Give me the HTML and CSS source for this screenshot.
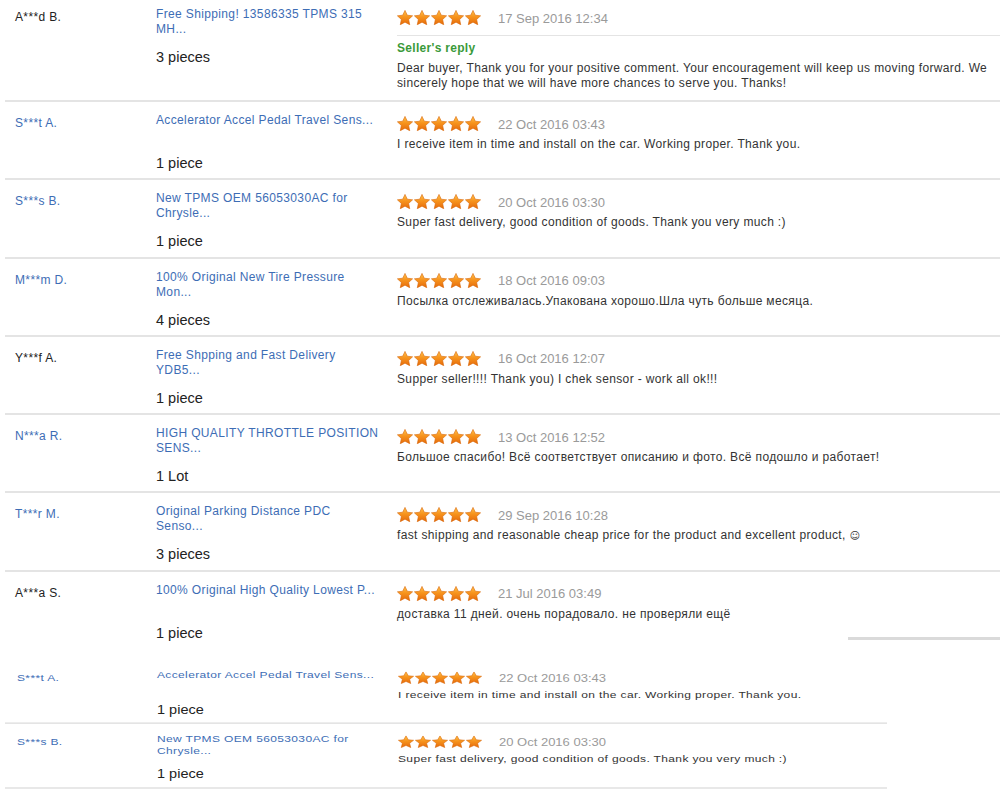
FILE: index.html
```html
<!DOCTYPE html>
<html lang="en">
<head>
<meta charset="utf-8">
<title>Feedback</title>
<link rel="stylesheet" href="styles.css">
</head>
<body>
<svg class="defs" aria-hidden="true">
  <defs>
    <linearGradient id="starFill" x1="0" y1="0" x2="0" y2="1">
      <stop offset="0" stop-color="#ffc04a"/>
      <stop offset="0.45" stop-color="#f7941d"/>
      <stop offset="1" stop-color="#e56a0b"/>
    </linearGradient>
    <symbol id="star" viewBox="0 0 16 15.2">
      <path d="M8 0.4 L10.3 5.2 L15.6 5.85 L11.65 9.45 L12.75 14.75 L8 12.15 L3.25 14.75 L4.35 9.45 L0.4 5.85 L5.7 5.2 Z" fill="url(#starFill)" stroke="#d8680c" stroke-width="0.6" stroke-linejoin="round"/>
    </symbol>
  </defs>
</svg>

<div class="reviews">
  <div class="review review--first">
    <div class="buyer">A***d B.</div>
    <div class="product">
      <a class="product-title" href="#">Free Shipping! 13586335 TPMS 315<br>MH...</a>
      <div class="qty">3 pieces</div>
    </div>
    <div class="feedback">
      <div class="rating">
        <svg class="stars" viewBox="0 0 84 16"><use href="#star" x="0" y="0" width="16" height="15.2"/><use href="#star" x="17" y="0" width="16" height="15.2"/><use href="#star" x="34" y="0" width="16" height="15.2"/><use href="#star" x="51" y="0" width="16" height="15.2"/><use href="#star" x="68" y="0" width="16" height="15.2"/></svg>
        <span class="date">17 Sep 2016 12:34</span>
      </div>
      <div class="reply">
        <div class="reply-title">Seller's reply</div>
        <div class="reply-text">Dear buyer, Thank you for your positive comment. Your encouragement will keep us moving forward. We sincerely hope that we will have more chances to serve you. Thanks!</div>
      </div>
    </div>
  </div>

  <div class="review">
    <div class="buyer buyer--link">S***t A.</div>
    <div class="product">
      <a class="product-title" href="#">Accelerator Accel Pedal Travel Sens...</a>
      <div class="qty">1 piece</div>
    </div>
    <div class="feedback">
      <div class="rating">
        <svg class="stars" viewBox="0 0 84 16"><use href="#star" x="0" y="0" width="16" height="15.2"/><use href="#star" x="17" y="0" width="16" height="15.2"/><use href="#star" x="34" y="0" width="16" height="15.2"/><use href="#star" x="51" y="0" width="16" height="15.2"/><use href="#star" x="68" y="0" width="16" height="15.2"/></svg>
        <span class="date">22 Oct 2016 03:43</span>
      </div>
      <div class="comment">I receive item in time and install on the car. Working proper. Thank you.</div>
    </div>
  </div>

  <div class="review">
    <div class="buyer buyer--link">S***s B.</div>
    <div class="product">
      <a class="product-title" href="#">New TPMS OEM 56053030AC for<br>Chrysle...</a>
      <div class="qty">1 piece</div>
    </div>
    <div class="feedback">
      <div class="rating">
        <svg class="stars" viewBox="0 0 84 16"><use href="#star" x="0" y="0" width="16" height="15.2"/><use href="#star" x="17" y="0" width="16" height="15.2"/><use href="#star" x="34" y="0" width="16" height="15.2"/><use href="#star" x="51" y="0" width="16" height="15.2"/><use href="#star" x="68" y="0" width="16" height="15.2"/></svg>
        <span class="date">20 Oct 2016 03:30</span>
      </div>
      <div class="comment">Super fast delivery, good condition of goods. Thank you very much :)</div>
    </div>
  </div>

  <div class="review">
    <div class="buyer buyer--link">M***m D.</div>
    <div class="product">
      <a class="product-title" href="#">100% Original New Tire Pressure<br>Mon...</a>
      <div class="qty">4 pieces</div>
    </div>
    <div class="feedback">
      <div class="rating">
        <svg class="stars" viewBox="0 0 84 16"><use href="#star" x="0" y="0" width="16" height="15.2"/><use href="#star" x="17" y="0" width="16" height="15.2"/><use href="#star" x="34" y="0" width="16" height="15.2"/><use href="#star" x="51" y="0" width="16" height="15.2"/><use href="#star" x="68" y="0" width="16" height="15.2"/></svg>
        <span class="date">18 Oct 2016 09:03</span>
      </div>
      <div class="comment">Посылка отслеживалась.Упакована хорошо.Шла чуть больше месяца.</div>
    </div>
  </div>

  <div class="review">
    <div class="buyer">Y***f A.</div>
    <div class="product">
      <a class="product-title" href="#">Free Shpping and Fast Delivery<br>YDB5...</a>
      <div class="qty">1 piece</div>
    </div>
    <div class="feedback">
      <div class="rating">
        <svg class="stars" viewBox="0 0 84 16"><use href="#star" x="0" y="0" width="16" height="15.2"/><use href="#star" x="17" y="0" width="16" height="15.2"/><use href="#star" x="34" y="0" width="16" height="15.2"/><use href="#star" x="51" y="0" width="16" height="15.2"/><use href="#star" x="68" y="0" width="16" height="15.2"/></svg>
        <span class="date">16 Oct 2016 12:07</span>
      </div>
      <div class="comment">Supper seller!!!! Thank you) I chek sensor - work all ok!!!</div>
    </div>
  </div>

  <div class="review">
    <div class="buyer buyer--link">N***a R.</div>
    <div class="product">
      <a class="product-title" href="#">HIGH QUALITY THROTTLE POSITION<br>SENS...</a>
      <div class="qty">1 Lot</div>
    </div>
    <div class="feedback">
      <div class="rating">
        <svg class="stars" viewBox="0 0 84 16"><use href="#star" x="0" y="0" width="16" height="15.2"/><use href="#star" x="17" y="0" width="16" height="15.2"/><use href="#star" x="34" y="0" width="16" height="15.2"/><use href="#star" x="51" y="0" width="16" height="15.2"/><use href="#star" x="68" y="0" width="16" height="15.2"/></svg>
        <span class="date">13 Oct 2016 12:52</span>
      </div>
      <div class="comment">Большое спасибо! Всё соответствует описанию и фото. Всё подошло и работает!</div>
    </div>
  </div>

  <div class="review">
    <div class="buyer buyer--link">T***r M.</div>
    <div class="product">
      <a class="product-title" href="#">Original Parking Distance PDC<br>Senso...</a>
      <div class="qty">3 pieces</div>
    </div>
    <div class="feedback">
      <div class="rating">
        <svg class="stars" viewBox="0 0 84 16"><use href="#star" x="0" y="0" width="16" height="15.2"/><use href="#star" x="17" y="0" width="16" height="15.2"/><use href="#star" x="34" y="0" width="16" height="15.2"/><use href="#star" x="51" y="0" width="16" height="15.2"/><use href="#star" x="68" y="0" width="16" height="15.2"/></svg>
        <span class="date">29 Sep 2016 10:28</span>
      </div>
      <div class="comment">fast shipping and reasonable cheap price for the product and excellent product, <span class="emoji">☺</span></div>
    </div>
  </div>

  <div class="review review--tail">
    <div class="buyer">A***a S.</div>
    <div class="product">
      <a class="product-title" href="#">100% Original High Quality Lowest P...</a>
      <div class="qty">1 piece</div>
    </div>
    <div class="feedback">
      <div class="rating">
        <svg class="stars" viewBox="0 0 84 16"><use href="#star" x="0" y="0" width="16" height="15.2"/><use href="#star" x="17" y="0" width="16" height="15.2"/><use href="#star" x="34" y="0" width="16" height="15.2"/><use href="#star" x="51" y="0" width="16" height="15.2"/><use href="#star" x="68" y="0" width="16" height="15.2"/></svg>
        <span class="date">21 Jul 2016 03:49</span>
      </div>
      <div class="comment">доставка 11 дней. очень порадовало. не проверяли ещё</div>
      <div class="tail-rule"></div>
    </div>
  </div>

  <div class="compact">
    <div class="review review--compact">
      <div class="buyer buyer--link">S***t A.</div>
      <div class="product">
        <a class="product-title" href="#">Accelerator Accel Pedal Travel Sens...</a>
        <div class="qty">1 piece</div>
      </div>
      <div class="feedback">
        <div class="rating">
          <svg class="stars" viewBox="0 0 84 16"><use href="#star" x="0" y="0" width="16" height="15.2"/><use href="#star" x="17" y="0" width="16" height="15.2"/><use href="#star" x="34" y="0" width="16" height="15.2"/><use href="#star" x="51" y="0" width="16" height="15.2"/><use href="#star" x="68" y="0" width="16" height="15.2"/></svg>
          <span class="date">22 Oct 2016 03:43</span>
        </div>
        <div class="comment">I receive item in time and install on the car. Working proper. Thank you.</div>
      </div>
    </div>

    <div class="review review--compact">
      <div class="buyer buyer--link">S***s B.</div>
      <div class="product">
        <a class="product-title" href="#">New TPMS OEM 56053030AC for<br>Chrysle...</a>
        <div class="qty">1 piece</div>
      </div>
      <div class="feedback">
        <div class="rating">
          <svg class="stars" viewBox="0 0 84 16"><use href="#star" x="0" y="0" width="16" height="15.2"/><use href="#star" x="17" y="0" width="16" height="15.2"/><use href="#star" x="34" y="0" width="16" height="15.2"/><use href="#star" x="51" y="0" width="16" height="15.2"/><use href="#star" x="68" y="0" width="16" height="15.2"/></svg>
          <span class="date">20 Oct 2016 03:30</span>
        </div>
        <div class="comment">Super fast delivery, good condition of goods. Thank you very much :)</div>
      </div>
    </div>

    <div class="review review--compact">
      <div class="buyer buyer--link">M***m D.</div>
      <div class="product">
        <a class="product-title" href="#">100% Original New Tire Pressure<br>Mon...</a>
        <div class="qty">4 pieces</div>
      </div>
      <div class="feedback">
        <div class="rating">
          <svg class="stars" viewBox="0 0 84 16"><use href="#star" x="0" y="0" width="16" height="15.2"/><use href="#star" x="17" y="0" width="16" height="15.2"/><use href="#star" x="34" y="0" width="16" height="15.2"/><use href="#star" x="51" y="0" width="16" height="15.2"/><use href="#star" x="68" y="0" width="16" height="15.2"/></svg>
          <span class="date">18 Oct 2016 09:03</span>
        </div>
        <div class="comment">Посылка отслеживалась.Упакована хорошо.Шла чуть больше месяца.</div>
      </div>
    </div>
  </div>
</div>
</body>
</html>
```

FILE: styles.css
```css
html {
  overflow: hidden;
}

body {
  margin: 0;
  background: #ffffff;
  color: #333333;
  font-family: "Liberation Sans", Arial, sans-serif;
  font-size: 12px;
  letter-spacing: 0.36px;
}

.defs {
  display: block;
  width: 0;
  height: 0;
  overflow: hidden;
}

.reviews {
  margin-left: 5px;
}

.review {
  display: grid;
  grid-template-columns: 151px 241px 1fr;
  min-height: 76.3px;
  border-bottom: 2px solid #e4e4e4;
}

.review--first {
  margin-top: -4px;
}

.review--tail {
  min-height: 88px;
  border-bottom: none;
}

.buyer {
  padding: 14px 0 0 10px;
  line-height: 15px;
  color: #222222;
}

.buyer--link {
  color: #3d6db5;
}

.product {
  padding-top: 11px;
}

.product-title {
  display: block;
  min-height: 30px;
  line-height: 15px;
  white-space: nowrap;
  color: #3d6db5;
  text-decoration: none;
}

.qty {
  margin-top: 11px;
  font-size: 14.5px;
  line-height: 18px;
  letter-spacing: 0;
  color: #222222;
}

.feedback {
  padding: 14px 0 9px;
}

.rating {
  display: flex;
  align-items: center;
  gap: 17px;
  height: 16px;
}

.stars {
  display: block;
  width: 84px;
  height: 16px;
}

.date {
  color: #9a9a9a;
  font-size: 13px;
  letter-spacing: 0;
}

.comment {
  margin-top: 5px;
  line-height: 15px;
  color: #333333;
}

.emoji {
  font-family: "DejaVu Sans", sans-serif;
  font-size: 10px;
}

.reply {
  margin-top: 9px;
  border-top: 1px solid #e4e4e4;
}

.reply-title {
  margin-top: 5px;
  line-height: 15px;
  color: #3a9a3a;
  font-weight: bold;
  letter-spacing: 0.3px;
}

.reply-text {
  margin-top: 5px;
  line-height: 15px;
  color: #333333;
}

.tail-rule {
  width: 152px;
  height: 3px;
  margin-top: 15px;
  margin-left: auto;
  background: #dadada;
}

.compact {
  width: 882px;
  transform: scaleY(0.8205);
  transform-origin: top left;
}

.review--compact {
  grid-template-columns: 152px 241px 1fr;
}

.review--compact .buyer {
  padding-left: 12px;
}
```
